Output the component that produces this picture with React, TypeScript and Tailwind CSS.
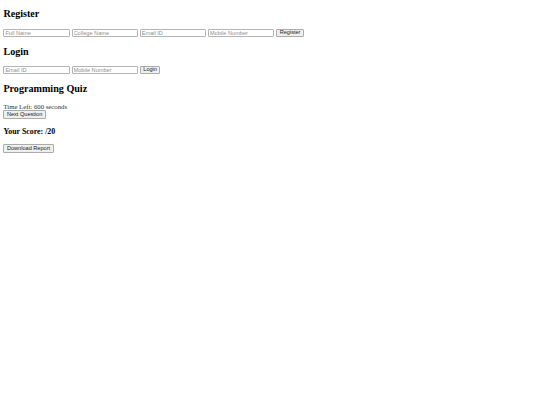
import React from "react";

const inputCls =
  "box-border h-[8.9px] w-[66.5px] rounded-[1px] border border-[#b4b4b4] bg-white px-[1px] font-['Liberation_Sans',Arial,sans-serif] text-[5.6px] leading-none text-black outline-none placeholder:text-[#8e8e8e]";
const btnCls =
  "box-border h-[8.9px] rounded-[1px] border border-[#ababab] bg-[#efefef] px-[2.5px] font-['Liberation_Sans',Arial,sans-serif] text-[5.6px] leading-none text-[#222]";
const h2Cls = "my-[8.4px] text-[10.125px] font-bold leading-[11.64px]";

export default function App() {
  return (
    <div className="min-h-screen bg-white px-[3.4px] py-[0.1px] font-['Liberation_Serif','Times_New_Roman',serif] text-[6.75px] leading-[7.76px] text-black">
      <h2 className={h2Cls}>Register</h2>
      <div className="flex h-[8.6px] items-start gap-[1.7px]">
        <input className={inputCls} placeholder="Full Name" />
        <input className={inputCls} placeholder="College Name" />
        <input className={inputCls} placeholder="Email ID" />
        <input className={inputCls} placeholder="Mobile Number" />
        <button className={btnCls}>Register</button>
      </div>
      <h2 className={h2Cls}>Login</h2>
      <div className="flex h-[8.6px] items-start gap-[1.7px]">
        <input className={inputCls} placeholder="Email ID" />
        <input className={inputCls} placeholder="Mobile Number" />
        <button className={btnCls}>Login</button>
      </div>
      <h2 className={h2Cls}>Programming Quiz</h2>
      <div className="text-[#333]">Time Left: 600 seconds</div>
      <div className="flex">
        <button className={btnCls}>Next Question</button>
      </div>
      <h3 className="my-[7.9px] text-[7.9px] font-bold leading-[9.08px]">Your Score: /20</h3>
      <div className="flex">
        <button className={btnCls}>Download Report</button>
      </div>
    </div>
  );
}
